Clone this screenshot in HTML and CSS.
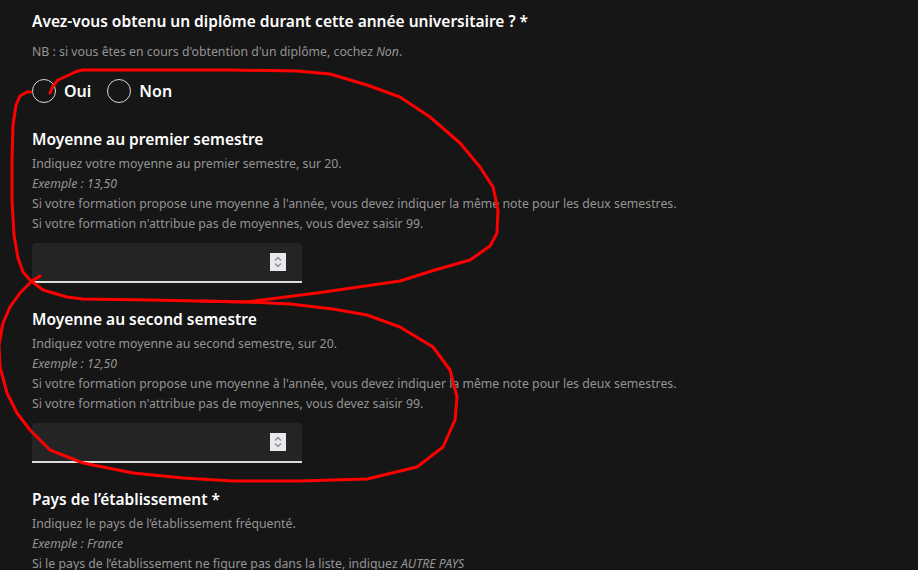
FILE: index.html
```html
<!DOCTYPE html>
<html lang="fr">
<head>
    <meta charset="utf-8">
    <link rel="stylesheet" href="styles.css">
</head>
<body>
    <div class="form">
        <div class="question">
            <h2 class="label">Avez-vous obtenu un diplôme durant cette année universitaire ? *</h2>
            <p class="hint hint-nb">NB : si vous êtes en cours d'obtention d'un diplôme, cochez <em>Non</em>.</p>
            <div class="radios">
                <label class="radio"><input type="radio" name="diplome" value="oui"><span>Oui</span></label>
                <label class="radio"><input type="radio" name="diplome" value="non"><span>Non</span></label>
            </div>
        </div>

        <div class="question">
            <h2 class="label">Moyenne au premier semestre</h2>
            <div class="hint">
                <p>Indiquez votre moyenne au premier semestre, sur 20.</p>
                <p><em>Exemple : 13,50</em></p>
                <p>Si votre formation propose une moyenne à l'année, vous devez indiquer la même note pour les deux semestres.</p>
                <p>Si votre formation n'attribue pas de moyennes, vous devez saisir 99.</p>
            </div>
            <div class="field">
                <input type="text" inputmode="decimal" aria-label="Moyenne au premier semestre">
                <span class="spinner"><svg width="10" height="14" viewBox="0 0 10 14"><path d="M2 5.5 5 2.5 8 5.5M2 8.5 5 11.5 8 8.5" fill="none" stroke="#8e8e98" stroke-width="1.4"/></svg></span>
            </div>
        </div>

        <div class="question">
            <h2 class="label">Moyenne au second semestre</h2>
            <div class="hint">
                <p>Indiquez votre moyenne au second semestre, sur 20.</p>
                <p><em>Exemple : 12,50</em></p>
                <p>Si votre formation propose une moyenne à l'année, vous devez indiquer la même note pour les deux semestres.</p>
                <p>Si votre formation n'attribue pas de moyennes, vous devez saisir 99.</p>
            </div>
            <div class="field">
                <input type="text" inputmode="decimal" aria-label="Moyenne au second semestre">
                <span class="spinner"><svg width="10" height="14" viewBox="0 0 10 14"><path d="M2 5.5 5 2.5 8 5.5M2 8.5 5 11.5 8 8.5" fill="none" stroke="#8e8e98" stroke-width="1.4"/></svg></span>
            </div>
        </div>

        <div class="question">
            <h2 class="label">Pays de l’établissement *</h2>
            <div class="hint">
                <p>Indiquez le pays de l’établissement fréquenté.</p>
                <p><em>Exemple : France</em></p>
                <p>Si le pays de l’établissement ne figure pas dans la liste, indiquez <em>AUTRE PAYS</em></p>
            </div>
        </div>
    </div>

    <!-- annotations a la main par-dessus la page -->
    <svg class="scribble" width="918" height="570" viewBox="0 0 918 570">
        <polyline points="50,93 53,86 58,80 67,76 75,72 82,70 150,70 230,70 297,71 330,74 367,85 400,97 430,117 460,143 480,167 493,187 498,210 497,233 490,246 470,260 435,270 400,281 317,293 247,302 150,300 83,299 67,297 43,290 30,280 23,272 18,258 14,235 12,200 12,160 13,125 16,105 20,96 27,92 31,92"/>
        <polyline points="40,276 32,281 20,293 10,307 3,323 -1,345 0,367 7,393 17,413 30,430 50,450 83,463 133,473 183,478 233,481 300,481 367,479 417,467 443,447 455,420 457,397 450,370 433,347 400,327 367,315 333,309 290,304 247,302 200,301"/>
    </svg>
</body>
</html>
```

FILE: styles.css
```css
body {
    margin: 0;
    background-color: #161616;
    color: #fff;
    font-family: "Noto Sans", "Open Sans", sans-serif;
    position: relative;
    overflow: hidden;
}

.form {
    padding: 9px 32px 0;
}

.question {
    margin-bottom: 24px;
}

.label {
    margin: 0;
    font-size: 15.5px;
    font-weight: 600;
    line-height: 24px;
    color: #fff;
}

.hint {
    margin: 3px 0 0;
    font-size: 12.3px;
    line-height: 20px;
    color: #949494;
}

.hint p {
    margin: 0;
}

.hint-nb {
    margin-top: 9px;
}

.radios {
    display: flex;
    gap: 16px;
    margin-top: 17px;
}

.radio {
    display: flex;
    align-items: center;
    gap: 8px;
    font-size: 16px;
    font-weight: 600;
    cursor: pointer;
}

.radio input {
    appearance: none;
    margin: 0;
    width: 24px;
    height: 24px;
    border: 1px solid #d8d8d8;
    border-radius: 50%;
    background: transparent;
}

.radio input:checked {
    background: radial-gradient(circle, #fff 0 5px, transparent 6px);
}

.field {
    display: flex;
    align-items: center;
    width: 270px;
    height: 38px;
    margin-top: 9px;
    background: #242424;
    border-bottom: 2px solid #dcdcdc;
    border-radius: 4px 4px 0 0;
}

.field input {
    flex: 1;
    min-width: 0;
    height: 100%;
    padding: 0 12px;
    border: none;
    background: transparent;
    color: #fff;
    font-size: 14px;
    outline: none;
}

.spinner {
    display: flex;
    align-items: center;
    justify-content: center;
    width: 16px;
    height: 18px;
    margin-right: 16px;
    background: #e8e8ee;
}

.scribble {
    position: absolute;
    top: 0;
    left: 0;
    pointer-events: none;
}

.scribble polyline {
    fill: none;
    stroke: #ff0000;
    stroke-width: 3;
    stroke-linejoin: round;
    stroke-linecap: round;
}
```
